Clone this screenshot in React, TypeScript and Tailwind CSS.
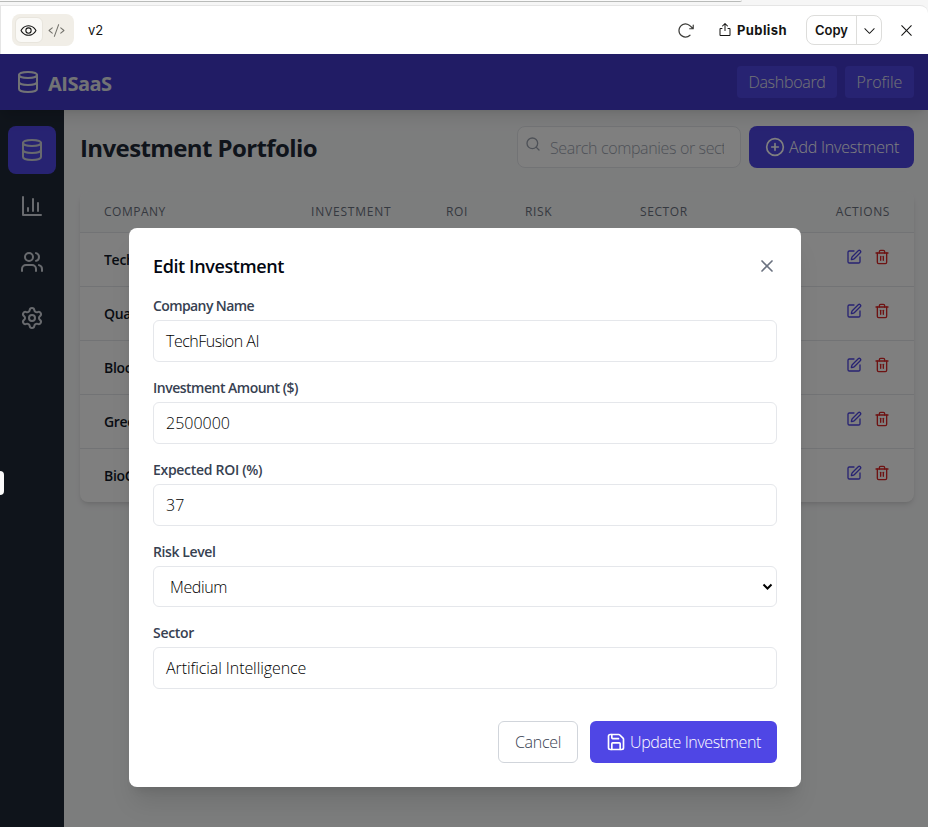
import React from "react";
import { Database, Users, Settings, Search, CirclePlus, SquarePen, Trash2, X, Save } from "lucide-react";
import { PiEye, PiCode, PiArrowClockwise, PiExport, PiCaretDown, PiX } from "react-icons/pi";

const companies = ["TechFusion AI", "Quantum Labs", "BlockChain Co", "GreenEnergy", "BioGenetics"];

function Toolbar() {
  return (
    <div className="flex h-[54px] shrink-0 flex-col bg-[#f6f6f6]">
      <div className="h-[2px] w-[742px] rounded-br-[4px] border-b border-[#b9bbb9] bg-[#fafafa]" />
      <div className="mt-[3px] flex flex-1 items-center rounded-tr-lg border-t border-l border-[#e5e5e5] bg-white pr-[13px] pl-[11px] font-['Inter',sans-serif] text-[#141413]">
        <div className="flex h-8 w-[62px] items-center rounded-lg bg-[#f1eee7] pr-1 pl-[3px]">
          <div className="flex h-[26px] w-7 items-center justify-center rounded-md border border-[#e8e5dd] bg-[#faf9f6]">
            <PiEye size={17} />
          </div>
          <div className="flex w-[28px] items-center justify-center text-[#73726c]">
            <PiCode size={17} />
          </div>
        </div>
        <span className="ml-[14px] text-[13px] leading-5">v2</span>
        <div className="ml-auto flex items-center">
          <PiArrowClockwise size={19} className="text-[#3d3d3a]" />
          <PiExport size={16} className="ml-[22px]" />
          <span className="ml-1 w-[51px] text-[13px] leading-5 font-bold tracking-[0.4px]">Publish</span>
          <div className="ml-[18px] flex h-[30px] w-[76px] rounded-lg border border-[#dddddb]">
            <span className="flex w-[50px] items-center justify-center border-r border-[#dddddb] pt-px text-[13px] font-semibold">Copy</span>
            <span className="flex flex-1 items-center justify-center"><PiCaretDown size={15} /></span>
          </div>
          <PiX size={17} className="ml-4" />
        </div>
      </div>
    </div>
  );
}

function ColumnsChart() {
  return (
    <svg width="24" height="24" viewBox="0 0 24 24" fill="none" stroke="currentColor" strokeWidth="2" strokeLinecap="round" strokeLinejoin="round">
      <path d="M3 3v18h18M18 17V9M13 17V5M8 17v-3" />
    </svg>
  );
}

function Sidebar() {
  return (
    <nav className="flex w-16 shrink-0 flex-col items-center gap-2 bg-[#1f2937] pt-4 text-gray-300">
      <div className="flex size-12 items-center justify-center rounded-lg bg-[#4f46e5]"><Database size={24} /></div>
      <div className="flex size-12 items-center justify-center"><ColumnsChart /></div>
      <div className="flex size-12 items-center justify-center"><Users size={24} /></div>
      <div className="flex size-12 items-center justify-center"><Settings size={24} /></div>
    </nav>
  );
}

function Portfolio() {
  return (
    <main className="flex-1 bg-[#f9fafb] pt-4 pr-[14px] pl-4">
      <div className="flex h-[42px] items-center justify-between">
        <h1 className="pt-px text-[24px] leading-8 font-bold tracking-[-0.6px] whitespace-nowrap text-[#1f2937]">Investment Portfolio</h1>
        <div className="flex gap-2">
          <div className="flex h-[42px] w-[224px] rounded-lg border border-[#e5e7eb] bg-white pt-[9px] pr-4 pl-[7px] text-[#9ca3af]">
            <Search size={16} className="shrink-0" />
            <input
              className="ml-[9px] h-6 w-full min-w-0 bg-transparent text-[16px] leading-6 font-light tracking-[-0.36px] placeholder:text-[#9ca3af]"
              placeholder="Search companies or sectors..."
            />
          </div>
          <div className="flex h-[42px] w-[165px] items-center rounded-lg bg-[#4f46e5] pl-4 text-white">
            <CirclePlus size={20} />
            <span className="ml-1 text-[16px] font-light tracking-[-0.2px] whitespace-nowrap">Add Investment</span>
          </div>
        </div>
      </div>
      <div className="mt-6 overflow-hidden rounded-lg bg-white shadow-md">
        <div className="grid h-[41px] grid-cols-[207px_135px_79px_115px_298px] items-center border-b border-[#e5e7eb] bg-[#f9fafb] text-[12px] tracking-[0.6px] text-[#6b7280] uppercase">
          <span className="pl-6 tracking-[0.5px]">Company</span>
          <span className="pl-6 tracking-[0.8px]">Investment</span>
          <span className="pl-6">ROI</span>
          <span className="pl-6">Risk</span>
          <span className="flex justify-between pr-6 pl-6"><span>Sector</span><span>Actions</span></span>
        </div>
        {companies.map((name) => (
          <div key={name} className="flex h-[54px] items-center justify-between border-b border-[#e5e7eb] px-6 last:h-[53px] last:border-0">
            <span className="w-[120px] overflow-hidden text-[14px] font-semibold tracking-[-0.3px] whitespace-nowrap text-[#111827]">{name}</span>
            <span className="mb-[6px] flex gap-3"><SquarePen size={16} className="text-[#4f46e5]" /><Trash2 size={16} className="text-[#dc2626]" /></span>
          </div>
        ))}
      </div>
    </main>
  );
}

function Label({ children, tracking }: { children: React.ReactNode; tracking: string }) {
  return <span className={`block h-5 text-[14px] leading-5 font-semibold text-[#374151] ${tracking}`}>{children}</span>;
}

type FieldProps = { label: string; labelTracking: string; value: string; valueTracking: string };

function Field({ label, labelTracking, value, valueTracking }: FieldProps) {
  return (
    <label className="block">
      <Label tracking={labelTracking}>{label}</Label>
      <span className={`mt-1 flex h-[42px] items-center rounded-md border border-[#e5e7eb] px-3 text-[16px] font-light text-black ${valueTracking}`}>{value}</span>
    </label>
  );
}

function EditModal() {
  return (
    <div className="mt-[174px] ml-[2px] h-[559px] w-[672px] rounded-lg bg-white px-6 pt-6 text-[#030712] shadow-xl">
      <div className="flex h-7 items-center justify-between">
        <h2 className="text-[18px] leading-7 font-semibold tracking-[-0.4px]">Edit Investment</h2>
        <X size={20} className="text-[#6b7280]" />
      </div>
      <div className="mt-4 flex flex-col gap-4">
        <Field label="Company Name" labelTracking="tracking-[-0.6px]" value="TechFusion AI" valueTracking="tracking-[-0.5px]" />
        <Field label="Investment Amount ($)" labelTracking="tracking-[-0.5px]" value="2500000" valueTracking="tracking-[0px]" />
        <Field label="Expected ROI (%)" labelTracking="tracking-[-0.3px]" value="37" valueTracking="tracking-[0px]" />
        <div>
          <Label tracking="tracking-[-0.4px]">Risk Level</Label>
          <div className="mt-1 flex h-[41px] items-center justify-between rounded-md border border-[#e5e7eb] pr-[3px] pl-4 text-[16px] font-light text-black">
            <span className="pt-px tracking-[-0.4px]">Medium</span>
            <svg width="11" height="8" viewBox="0 0 11 8" fill="none" stroke="currentColor" strokeWidth="2"><path d="M1.5 1.5 5.5 5.5 9.5 1.5" /></svg>
          </div>
        </div>
        <Field label="Sector" labelTracking="tracking-[-0.3px]" value="Artificial Intelligence" valueTracking="tracking-[-0.08px]" />
      </div>
      <div className="mt-8 flex justify-end gap-3 font-light">
        <div className="flex h-[42px] w-20 items-center justify-center rounded-md border border-[#d1d5db] tracking-[-0.3px] text-[#374151]">Cancel</div>
        <div className="flex h-[42px] w-[187px] items-center rounded-md bg-[#4f46e5] pl-4 text-white">
          <Save size={20} />
          <span className="ml-1 tracking-[-0.38px] whitespace-nowrap">Update Investment</span>
        </div>
      </div>
    </div>
  );
}

export default function App() {
  return (
    <div className="relative flex h-[827px] w-[928px] flex-col overflow-hidden font-['Open_Sans','Noto_Sans',sans-serif]">
      <Toolbar />
      <div className="relative flex flex-1 flex-col">
        <header className="z-10 flex h-14 items-center bg-[#4338ca] pr-[14px] pl-4 text-gray-200 shadow-lg">
          <Database size={24} />
          <span className="ml-2 pt-1 text-[20px] font-bold tracking-[-0.5px]">AISaaS</span>
          <div className="ml-auto flex gap-2 font-light">
            <span className="flex h-8 w-[100px] items-center justify-center rounded bg-[#4f46e5] tracking-[-0.3px]">Dashboard</span>
            <span className="flex h-8 w-[69px] items-center justify-center rounded bg-[#4f46e5]">Profile</span>
          </div>
        </header>
        <div className="flex flex-1"><Sidebar /><Portfolio /></div>
        <div className="absolute inset-0 z-20 flex items-start justify-center bg-black/50"><EditModal /></div>
      </div>
      <div className="absolute top-[471px] left-0 z-30 h-6 w-1 rounded-r bg-[#fafafa]" />
    </div>
  );
}
